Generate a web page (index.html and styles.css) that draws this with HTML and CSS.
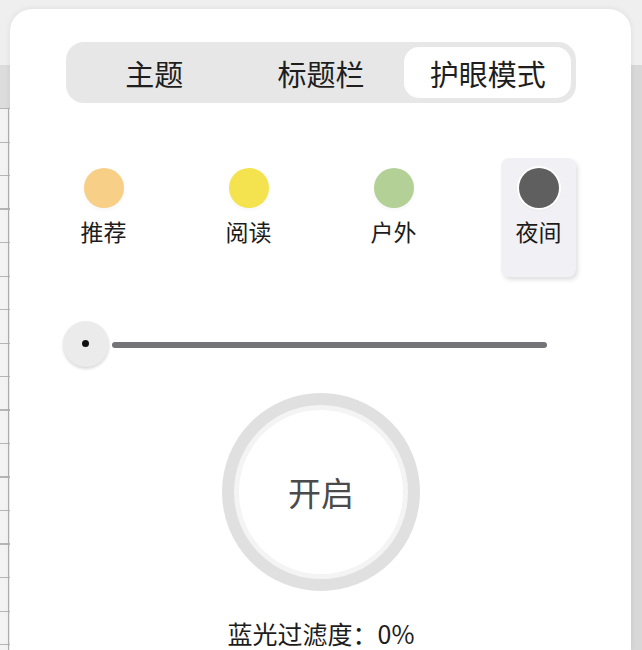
FILE: index.html
```html
<!DOCTYPE html>
<html lang="zh-CN">
<head>
    <meta charset="UTF-8">
    <meta name="viewport" content="width=device-width, initial-scale=1.0">
    <title>护眼模式</title>
    <link rel="stylesheet" href="styles.css">
</head>
<body>
    <div class="panel">
        <div class="tabs">
            <div class="tab">主题</div>
            <div class="tab">标题栏</div>
            <div class="tab active">护眼模式</div>
        </div>

        <div class="modes">
            <div class="mode">
                <span class="dot dot-recommend"></span>
                <span class="mode-name">推荐</span>
            </div>
            <div class="mode">
                <span class="dot dot-read"></span>
                <span class="mode-name">阅读</span>
            </div>
            <div class="mode">
                <span class="dot dot-outdoor"></span>
                <span class="mode-name">户外</span>
            </div>
            <div class="mode selected">
                <span class="dot dot-night"></span>
                <span class="mode-name">夜间</span>
            </div>
        </div>

        <div class="slider">
            <div class="thumb"><span class="thumb-dot"></span></div>
            <div class="track"></div>
        </div>

        <div class="switch-wrap">
            <div class="switch">
                <div class="switch-inner">开启</div>
            </div>
        </div>

        <p class="filter-level">蓝光过滤度：0%</p>
    </div>
</body>
</html>
```

FILE: styles.css
```css
* {
    box-sizing: border-box;
}

body {
    margin: 0;
    height: 650px;
    overflow: hidden;
    padding: 9px 11px 0 10px;
    font-family: "Noto Sans CJK SC", "Noto Sans", sans-serif;
    color: #1c1c1c;
    background-color: #efefef;
    /* table sheet behind the popup: row lines, column line, header band, side bar */
    background-image:
        repeating-linear-gradient(to bottom, #b5b5b5 0 1px, transparent 1px 33.5px),
        linear-gradient(to right, transparent 0 8px, #b0b0b0 8px 9px, transparent 9px),
        linear-gradient(#f3f3f3, #f3f3f3),
        linear-gradient(#dcdcdc, #dcdcdc),
        linear-gradient(#d8d8d8, #d8d8d8);
    background-size:
        10px 100%,
        10px 100%,
        10px 100%,
        10px 43px,
        11px 100%;
    background-position:
        0 108px,
        0 108px,
        0 108px,
        0 65px,
        right 0 top 65px;
    background-repeat: no-repeat;
}

.panel {
    height: 100%;
    overflow: hidden;
    background-color: #fff;
    border-radius: 22px 22px 0 0;
    box-shadow: 0 0 6px rgba(0, 0, 0, 0.08);
    padding-top: 33px;
}

/* segmented tabs */
.tabs {
    display: flex;
    height: 61px;
    margin: 0 55px 0 56px;
    padding: 5px;
    background-color: #e7e7e7;
    border-radius: 18px;
}

.tab {
    flex: 1;
    display: flex;
    align-items: center;
    justify-content: center;
    font-size: 29px;
    color: #1e1e1e;
    border-radius: 15px;
}

.tab.active {
    background-color: #fff;
}

/* colour presets */
.modes {
    display: flex;
    justify-content: space-between;
    margin: 55px 55px 0 56px;
}

.mode {
    width: 75px;
    height: 119px;
    padding-top: 10px;
    display: flex;
    flex-direction: column;
    align-items: center;
    border-radius: 8px;
}

.mode.selected {
    background-color: #f1f1f5;
    box-shadow: 2px 3px 4px rgba(0, 0, 0, 0.12);
}

.dot {
    width: 40px;
    height: 40px;
    border-radius: 50%;
    box-shadow: 0 0 0 2px rgba(255, 255, 255, 0.7), 0 1px 3px rgba(0, 0, 0, 0.14);
}

.dot-recommend {
    background-color: #f7cf86;
}

.dot-read {
    background-color: #f4e34e;
}

.dot-outdoor {
    background-color: #b3d096;
}

.dot-night {
    background-color: #5f5f5f;
    box-shadow: 0 0 0 2px #fff, 0 1px 3px rgba(0, 0, 0, 0.18);
}

.mode-name {
    margin-top: 8px;
    font-size: 23px;
    line-height: 30px;
}

/* brightness slider */
.slider {
    display: flex;
    align-items: center;
    margin: 44px 0 0 53px;
}

.thumb {
    width: 46px;
    height: 46px;
    border-radius: 50%;
    background-color: #ebebeb;
    box-shadow: 0 2px 3px rgba(0, 0, 0, 0.15);
    display: flex;
    align-items: center;
    justify-content: center;
}

.thumb-dot {
    width: 7px;
    height: 7px;
    border-radius: 50%;
    background-color: #111;
    margin: 0 2px 2px 0;
}

.track {
    width: 435px;
    height: 6px;
    margin: 2px 0 0 3px;
    border-radius: 3px;
    background-color: #737378;
}

/* on / off button */
.switch-wrap {
    display: flex;
    justify-content: center;
    margin-top: 26px;
    padding-left: 1px;
}

.switch {
    width: 198px;
    height: 198px;
    border-radius: 50%;
    border: 12px solid #e0e0e0;
    padding: 5px;
    background-color: #f4f4f4;
}

.switch-inner {
    width: 100%;
    height: 100%;
    border-radius: 50%;
    background-color: #fff;
    display: flex;
    align-items: center;
    justify-content: center;
    font-size: 33px;
    color: #4a4a4a;
}

.filter-level {
    margin: 28px 0 0;
    text-align: center;
    padding-left: 1px;
    font-size: 25px;
    line-height: 29px;
    color: #1c1c1c;
}
```
